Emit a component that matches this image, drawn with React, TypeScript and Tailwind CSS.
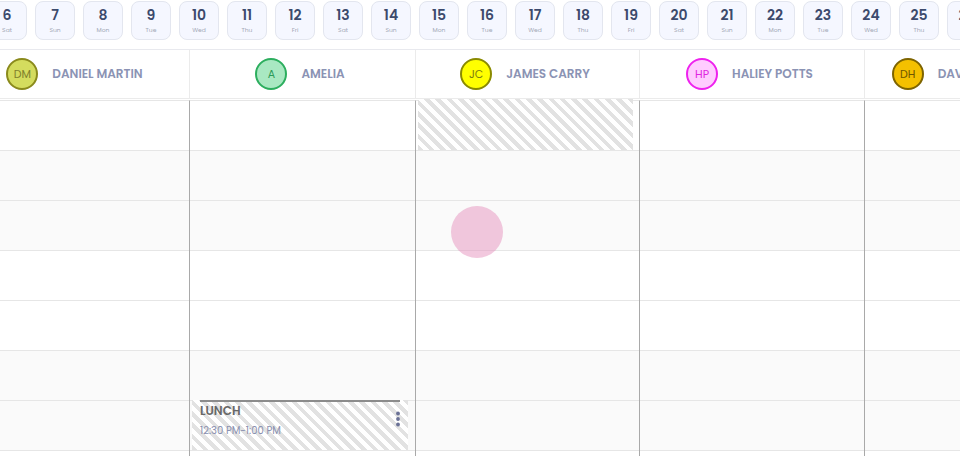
const dates: [number, string][] = [
  [6, "Sat"], [7, "Sun"], [8, "Mon"], [9, "Tue"], [10, "Wed"], [11, "Thu"], [12, "Fri"],
  [13, "Sat"], [14, "Sun"], [15, "Mon"], [16, "Tue"], [17, "Wed"], [18, "Thu"], [19, "Fri"],
  [20, "Sat"], [21, "Sun"], [22, "Mon"], [23, "Tue"], [24, "Wed"], [25, "Thu"], [26, "Fri"],
];

const people = [
  { init: "DM", name: "DANIEL MARTIN", w: "w-[225px]", avatar: "bg-[#d4dc5e] border-[#8a8a1c] text-[#80802c]" },
  { init: "A", name: "AMELIA", w: "w-[226px]", avatar: "bg-[#a9e8c2] border-[#2cae5e] text-[#2c9a58]" },
  { init: "JC", name: "JAMES CARRY", w: "w-[224px]", avatar: "bg-[#ffff00] border-[#8a8a00] text-[#7c7c10]" },
  { init: "HP", name: "HALIEY POTTS", w: "w-[225px]", avatar: "bg-[#ffccff] border-[#ee22ee] text-[#e026e0]" },
  { init: "DH", name: "DAVID HARRINGTON", w: "w-[225px]", avatar: "bg-[#f4c000] border-[#7e6400] text-[#6e5600]" },
];

// hour bands: white / gray alternate every two half-hour slots
const rowBg = ["bg-white", "bg-[#fafafa]", "bg-[#fafafa]", "bg-white", "bg-white", "bg-[#fafafa]", "bg-[#fafafa]", "bg-white"];

const stripes =
  "bg-[repeating-linear-gradient(45deg,#e2e2e2_0px,#e2e2e2_4px,#ffffff_4px,#ffffff_8px)]";

const Dots = () => (
  <svg width="6" height="16" viewBox="0 0 6 16" className="text-[#6a7196]">
    <circle cx="3" cy="2.5" r="1.9" fill="currentColor" />
    <circle cx="3" cy="8" r="1.9" fill="currentColor" />
    <circle cx="3" cy="13.5" r="1.9" fill="currentColor" />
  </svg>
);

const App = () => {
  return (
    <div className="relative w-[960px] h-[456px] overflow-hidden bg-white font-['Poppins','Inter',sans-serif]">
      <div className="flex gap-2 -ml-[13px] h-[50px] pt-px border-b border-[#e8e9ee]">
        {dates.map(([d, day]) => (
          <div
            key={d}
            className="w-10 h-[39px] shrink-0 rounded-lg border border-[#e3e6ef] bg-[#f5f7ff] flex flex-col items-center pt-[6px]"
          >
            <span className="text-[14px] font-semibold leading-none text-[#3c4a6c]">{d}</span>
            <span className="text-[6px] leading-none mt-[5px] text-[#a3a7b6]">{day}</span>
          </div>
        ))}
      </div>

      <div className="flex -ml-[35px]">
        {people.map((p, ci) => (
          <div key={p.init} className={`${p.w} shrink-0`}>
            <div className="h-[49px] pr-[5px] border-b border-r border-[#ebebeb] flex items-center justify-center gap-[14px]">
              <div
                className={`w-[32px] h-[32px] shrink-0 rounded-full border-2 flex items-center justify-center text-[11px] ${p.avatar}`}
              >
                {p.init}
              </div>
              <span className="text-[12px] font-semibold text-[#8b93b4] whitespace-nowrap">{p.name}</span>
            </div>
            <div className="mt-px border-t border-r border-t-[#e6e6e6] border-r-[#a9a9a9]">
              {rowBg.map((bg, ri) => (
                <div key={ri} className={`h-[50px] flex items-start border-b border-[#e6e6e6] pl-[2px] ${bg}`}>
                  {ci === 2 && ri === 0 && <div className={`w-[215px] h-[51px] -mt-[2px] ${stripes}`} />}
                  {ci === 1 && ri === 6 && (
                    <div className={`w-[216px] h-[50px] -mt-px flex flex-col ${stripes}`}>
                      <div className="mx-[8px] h-[2px] bg-[#8c8c8c]" />
                      <div className="flex justify-between items-start pl-[8px] pr-[7px] pt-[1px]">
                        <div className="flex flex-col">
                          <span className="text-[12px] font-semibold leading-[15px] text-[#686868]">LUNCH</span>
                          <span className="text-[10px] leading-[12px] mt-[7px] text-[#8a90b0]">12:30 PM-1:00 PM</span>
                        </div>
                        <div className="pt-[8px]">
                          <Dots />
                        </div>
                      </div>
                    </div>
                  )}
                </div>
              ))}
            </div>
          </div>
        ))}
      </div>

      <div className="absolute left-[451px] top-[206px] w-[52px] h-[52px] rounded-full bg-[rgba(230,146,190,0.5)]" />
    </div>
  );
};

export default App;
